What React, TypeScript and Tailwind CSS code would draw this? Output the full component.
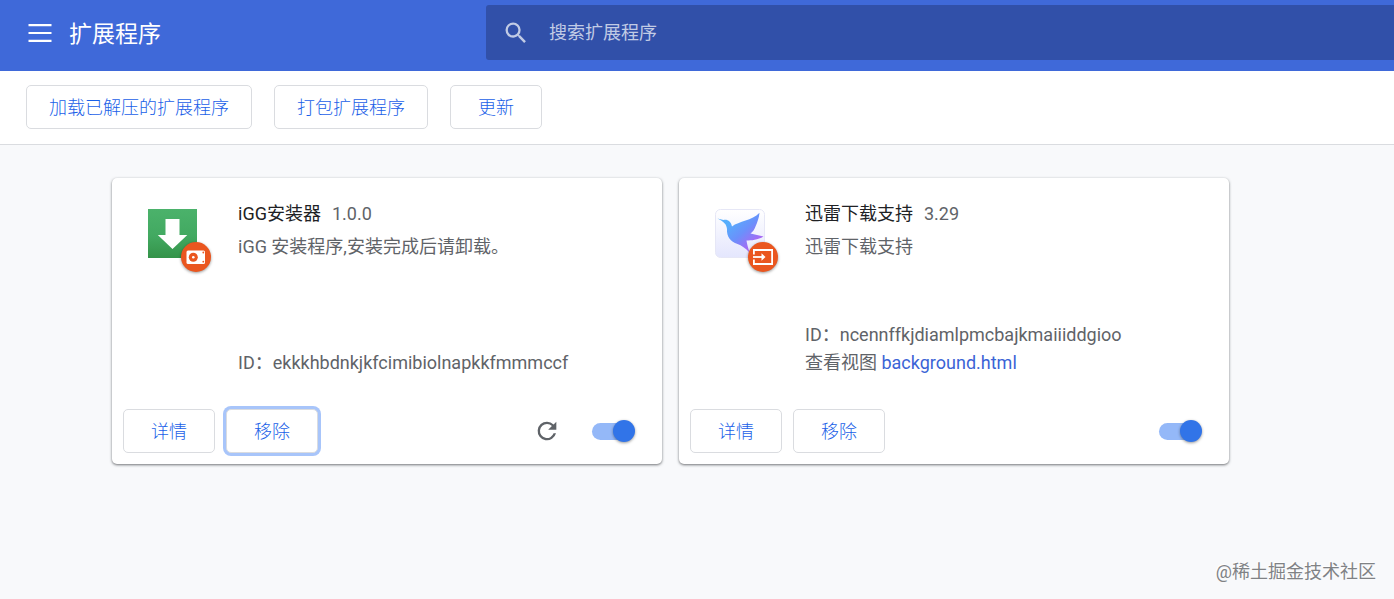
import React, { useState } from 'react';

interface Extension {
    id: string;
    name: string;
    version: string;
    description: string;
    view?: string;
    canReload?: boolean;
    focusRemove?: boolean;
    icon: React.ReactNode;
    badge: React.ReactNode;
}

const DownloadIcon = () => (
    <svg viewBox="0 0 49 49" className="size-[49px]" aria-hidden="true">
        <defs>
            <linearGradient id="green" x1="0" y1="0" x2="0" y2="1">
                <stop offset="0" stopColor="#4bb26b" />
                <stop offset="0.55" stopColor="#42a961" />
                <stop offset="1" stopColor="#349349" />
            </linearGradient>
        </defs>
        <path d="M0 0h49v49H0z" fill="url(#green)" />
        <path d="M17.500 10h14v16h7.800L24.500 40 9.800 26h7.700z" fill="#fff" />
    </svg>
);

const BirdIcon = () => (
    <svg viewBox="0 0 50 49" className="h-[49px] w-[50px]" aria-hidden="true">
        <defs>
            <linearGradient id="tile" x1="0" y1="0" x2="0" y2="1">
                <stop offset="0" stopColor="#ffffff" />
                <stop offset="1" stopColor="#e4e6fd" />
            </linearGradient>
            <linearGradient id="bird" gradientUnits="userSpaceOnUse" x1="14" y1="14" x2="36" y2="38">
                <stop offset="0" stopColor="#56aefc" />
                <stop offset="0.5" stopColor="#6b90fb" />
                <stop offset="1" stopColor="#a968f4" />
            </linearGradient>
        </defs>
        <rect x="0.5" y="0.5" width="49" height="48" rx="5" fill="url(#tile)" stroke="#e6e7f6" />
        <path
            d="M2.500 9.500 8.500 11C12.500 10 16 12.500 17 17.500 24 12 37 12 44.500 3.800 44 9 42.500 13 40.500 17.500 39.500 20.500 38 22.500 35.500 24.500L48.500 27.500C43 31 36 31.500 31.500 31.500 32 35 33 38.500 34.500 43.500 30.500 39 26.500 36.500 22.500 35 15.500 32.500 11.500 28 12 20 11.500 15.500 9.500 13 2.500 9.500z"
            fill="url(#bird)"
        />
    </svg>
);

const DriveBadge = () => (
    <svg viewBox="0 0 30 30" className="size-[30px]" aria-hidden="true">
        <rect x="5.500" y="8.500" width="18.500" height="13.500" rx="1.500" fill="#fff" />
        <circle cx="12.300" cy="15.200" r="4.500" fill="#ea561f" />
        <circle cx="12.300" cy="15.200" r="1.300" fill="#fff" />
        <circle cx="22.300" cy="10.500" r="0.900" fill="#ea561f" />
        <circle cx="22.300" cy="19.700" r="0.900" fill="#ea561f" />
    </svg>
);

const InputBadge = () => (
    <svg viewBox="0 0 30 30" className="size-[30px]" fill="none" stroke="#fff" strokeWidth="1.800" aria-hidden="true">
        <path d="M5.900 12.500V8h18.200v14H5.900v-4.500" />
        <path d="M5 15h10" />
        <path d="M13.500 11.200 17.500 15l-4 3.800z" fill="#fff" stroke="none" />
    </svg>
);

const extensions: Extension[] = [
    {
        id: 'ekkkhbdnkjkfcimibiolnapkkfmmmccf',
        name: 'iGG安装器',
        version: '1.0.0',
        description: 'iGG 安装程序,安装完成后请卸载。',
        canReload: true,
        focusRemove: true,
        icon: <DownloadIcon />,
        badge: <DriveBadge />,
    },
    {
        id: 'ncennffkjdiamlpmcbajkmaiiiddgioo',
        name: '迅雷下载支持',
        version: '3.29',
        description: '迅雷下载支持',
        view: 'background.html',
        icon: <BirdIcon />,
        badge: <InputBadge />,
    },
];

interface OutlineButtonProps {
    children: React.ReactNode;
    className?: string;
}

const OutlineButton: React.FC<OutlineButtonProps> = ({ children, className = '' }) => (
    <button
        type="button"
        className={`h-11 shrink-0 rounded-[5px] border border-[#dadce0] bg-white font-light text-[#1a5fe8] ${className}`}
    >
        {children}
    </button>
);

const Toggle: React.FC<{ label: string }> = ({ label }) => {
    const [checked, setChecked] = useState(true);

    return (
        <label className="relative flex h-[22px] w-[43px] items-center">
            <input
                type="checkbox"
                aria-label={label}
                checked={checked}
                onChange={(e) => setChecked(e.target.checked)}
                className="peer h-[17px] w-10 appearance-none rounded-full bg-[#bdc1c6] checked:bg-[#94b8f8]"
            />
            <span className="absolute left-0 size-[22px] rounded-full bg-white shadow-[0_1px_3px_rgba(0,0,0,0.4)] peer-checked:right-0 peer-checked:left-auto peer-checked:bg-[#3174e8]" />
        </label>
    );
};

const ExtensionCard: React.FC<{ ext: Extension }> = ({ ext }) => (
    <article className="flex flex-col rounded-[5px] bg-white shadow-[0_1px_3px_rgba(60,64,67,0.5),0_1px_2px_rgba(60,64,67,0.3)]">
        <div className="flex min-h-[222px] pr-6 pl-9">
            <div className="relative mt-[31px] h-[49px] w-[90px] shrink-0">
                {ext.icon}
                <span className="absolute top-[33px] left-[33px] rounded-full bg-[#ea561f] shadow-[0_1px_3px_rgba(0,0,0,0.4)]">
                    {ext.badge}
                </span>
            </div>
            <div className="flex min-w-0 flex-col pt-[22px] pb-[23px] leading-7">
                <h2 className="text-[#202124]">
                    {ext.name}
                    <span className="ml-[11px] text-[#5f6368]">{ext.version}</span>
                </h2>
                <p className="mt-[5px]">{ext.description}</p>
                <div className="mt-auto">
                    <p>ID：{ext.id}</p>
                    {ext.view && (
                        <p>
                            查看视图{' '}
                            <a href="#background" className="text-[#3b64d6]">
                                {ext.view}
                            </a>
                        </p>
                    )}
                </div>
            </div>
        </div>
        <div className="flex items-center pt-[9px] pr-[27px] pb-[11px] pl-[11px]">
            <OutlineButton className="w-[92px]">详情</OutlineButton>
            <OutlineButton className={`ml-[11px] w-[92px] ${ext.focusRemove ? 'ring-3 ring-[#a8c5fa]' : ''}`}>
                移除
            </OutlineButton>
            <div className="ml-auto flex items-center gap-[31px]">
                {ext.canReload && (
                    <button type="button" title="重新加载">
                        <svg viewBox="0 0 24 24" className="size-7" fill="#5f6368" aria-hidden="true">
                            <path d="M17.650 6.350A7.958 7.958 0 0 0 12 4a8 8 0 1 0 7.730 10h-2.080A6 6 0 1 1 12 6c1.660 0 3.140.690 4.220 1.780L13 11h7V4z" />
                        </svg>
                    </button>
                )}
                <Toggle label={ext.name} />
            </div>
        </div>
    </article>
);

const App: React.FC = () => {
    const [query, setQuery] = useState('');

    return (
        <div className="relative flex min-h-screen flex-col bg-[#f8f9fb] font-[Roboto,'Noto_Sans_CJK_SC',sans-serif] text-[18px] text-[#5f6368]">
            <header className="flex h-[71px] bg-[#3f69d9] pt-[5px] pb-[11px] text-white">
                <div className="flex w-[486px] shrink-0 items-center gap-[15px] pl-[26px]">
                    <button type="button" title="主菜单">
                        <svg viewBox="0 0 28 28" className="size-7" fill="currentColor" aria-hidden="true">
                            <path d="M2.500 5h23v2.200h-23zm0 7.900h23v2.200h-23zm0 7.900h23V23h-23z" />
                        </svg>
                    </button>
                    <h1 className="font-['Noto_Sans_CJK_SC',sans-serif] text-[23px]">扩展程序</h1>
                </div>
                <label className="flex min-w-0 flex-1 items-center gap-[19px] rounded-l-[3px] bg-[#3150a9] pl-4">
                    <svg viewBox="0 0 24 24" className="size-7 shrink-0" fill="#c1cbe5" aria-hidden="true">
                        <path d="M15.500 14h-.790l-.280-.270A6.471 6.471 0 0 0 16 9.500 6.500 6.500 0 1 0 9.500 16c1.610 0 3.090-.590 4.230-1.570l.270.280v.790l5 4.990L20.490 19zm-6 0C7.010 14 5 11.990 5 9.500S7.010 5 9.500 5 14 7.010 14 9.500 11.990 14 9.500 14z" />
                    </svg>
                    <input
                        type="search"
                        aria-label="搜索扩展程序"
                        placeholder="搜索扩展程序"
                        value={query}
                        onChange={(e) => setQuery(e.target.value)}
                        className="min-w-0 flex-1 bg-transparent text-white outline-none placeholder:text-[#c1cbe5]"
                    />
                </label>
            </header>

            <div className="flex gap-[22px] border-b border-[#dadce0] bg-white px-[26px] pt-[14px] pb-[15px]">
                <OutlineButton className="px-[22px]">加载已解压的扩展程序</OutlineButton>
                <OutlineButton className="px-[22px]">打包扩展程序</OutlineButton>
                <OutlineButton className="w-[92px]">更新</OutlineButton>
            </div>

            <main className="grid grid-cols-[repeat(auto-fill,550px)] gap-[17px] px-28 pt-[33px] pb-16">
                {extensions.map((ext) => (
                    <ExtensionCard key={ext.id} ext={ext} />
                ))}
            </main>

            <span className="absolute right-[18px] bottom-[14px] text-[#808285] [text-shadow:-1px_-1px_1px_#ffffff]">
                @稀土掘金技术社区
            </span>
        </div>
    );
};

export default App;
